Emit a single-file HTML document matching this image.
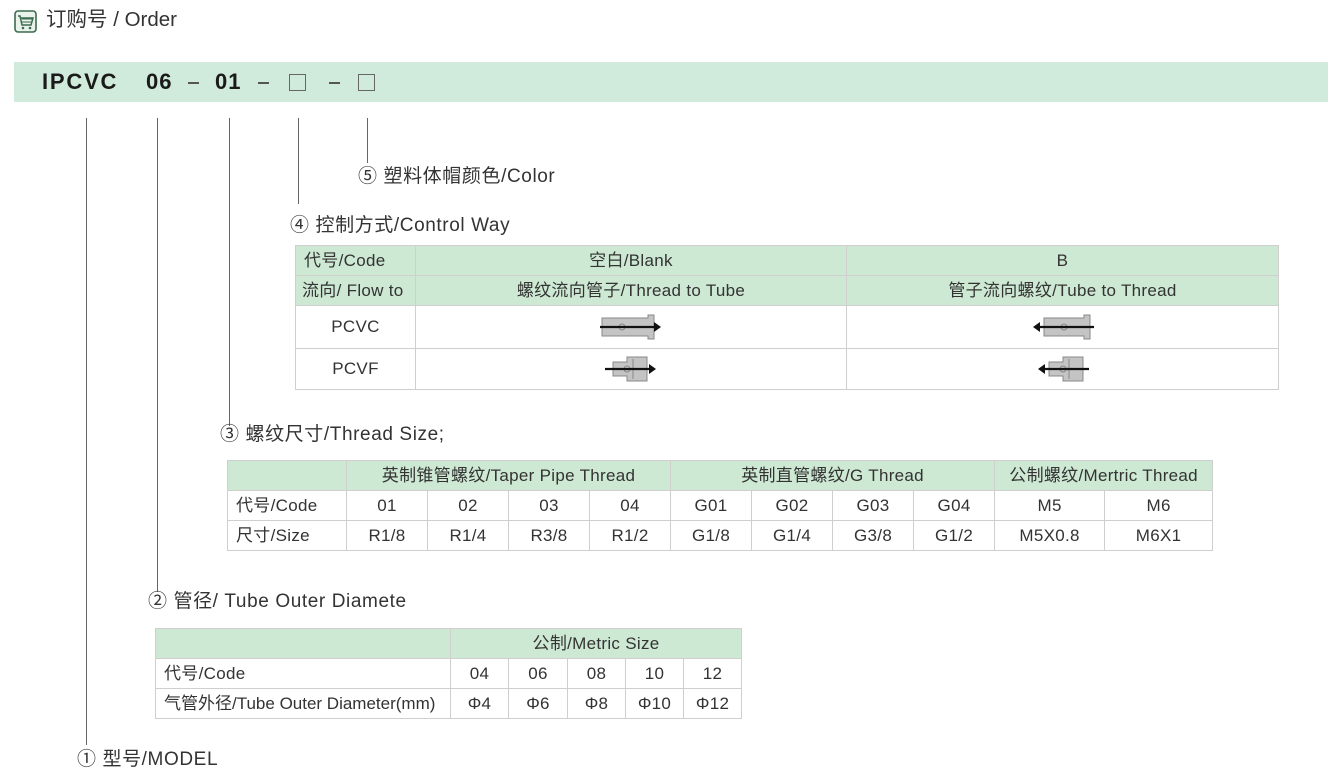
<!DOCTYPE html>
<html><head><meta charset="utf-8"><style>
*{margin:0;padding:0;box-sizing:border-box}
body{width:1328px;height:781px;background:#fff;position:relative;overflow:hidden;font-family:"Liberation Sans","Noto Sans CJK SC",sans-serif;color:#333}
.a{position:absolute;white-space:nowrap}
.v{position:absolute;width:1px;background:#666}
.lbl{font-size:19px;color:#333;line-height:22px;letter-spacing:0.6px}
table{position:absolute;border-collapse:collapse;table-layout:fixed;font-size:17px;color:#333;letter-spacing:0.3px}
td{border:1px solid #cfcfcf;text-align:center;padding:0;white-space:nowrap;line-height:18px}
.g td,td.g{background:#cde8d3}
td.l{text-align:left;padding-left:8px}
svg{vertical-align:middle}
</style></head><body>
<svg class="a" style="left:14px;top:10px" width="23" height="23" viewBox="0 0 23 23"><rect x="1" y="1" width="21" height="21" rx="3" fill="#e9f3ec" stroke="#3c6b4f" stroke-width="1.6"/><path d="M4 6h2l2 9h9l2-7H7" fill="none" stroke="#3c6b4f" stroke-width="1.5"/><path d="M8 9h10M8 12h9" stroke="#3c6b4f" stroke-width="1"/><circle cx="9" cy="18" r="1.3" fill="#3c6b4f"/><circle cx="16" cy="18" r="1.3" fill="#3c6b4f"/></svg>
<div class="a" style="left:46px;top:8px;font-size:20.5px;line-height:24px;color:#333">订购号 / Order</div>
<div class="a" style="left:14px;top:62px;width:1314px;height:40px;background:#d0eadb"></div>
<div class="a" style="left:42px;top:69px;font-size:22px;font-weight:bold;line-height:26px;color:#1a1a1a;letter-spacing:1.8px">IPCVC</div>
<div class="a" style="left:146px;top:69px;font-size:22px;font-weight:bold;line-height:26px;color:#1a1a1a;letter-spacing:1px">06</div>
<div class="a" style="left:188px;top:82px;width:11px;height:1.5px;background:#555"></div>
<div class="a" style="left:215px;top:69px;font-size:22px;font-weight:bold;line-height:26px;color:#1a1a1a;letter-spacing:1px">01</div>
<div class="a" style="left:258px;top:82px;width:11px;height:1.5px;background:#555"></div>
<div class="a" style="left:289px;top:74px;width:17px;height:17px;border:1.5px solid #666"></div>
<div class="a" style="left:329px;top:82px;width:11px;height:1.5px;background:#555"></div>
<div class="a" style="left:358px;top:74px;width:17px;height:17px;border:1.5px solid #666"></div>
<div class="v" style="left:86px;top:118px;height:627px"></div>
<div class="v" style="left:157px;top:118px;height:474px"></div>
<div class="v" style="left:229px;top:118px;height:308px"></div>
<div class="v" style="left:298px;top:118px;height:86px"></div>
<div class="v" style="left:367px;top:118px;height:45px"></div>
<div class="a lbl" style="left:358px;top:166px">⑤ 塑料体帽颜色/Color</div>
<div class="a lbl" style="left:290px;top:215px">④ 控制方式/Control Way</div>
<div class="a lbl" style="left:220px;top:424px">③ 螺纹尺寸/Thread Size;</div>
<div class="a lbl" style="left:148px;top:591px">② 管径/ Tube Outer Diamete</div>
<div class="a lbl" style="left:77px;top:749px">① 型号/MODEL</div>

<table style="left:295px;top:245px;width:983px">
<col style="width:120px"><col style="width:431px"><col style="width:432px">
<tr class="g" style="height:30px"><td class="l">代号/Code</td><td>空白/Blank</td><td>B</td></tr>
<tr class="g" style="height:30px"><td class="l" style="padding-left:6px">流向/ Flow to</td><td>螺纹流向管子/Thread to Tube</td><td>管子流向螺纹/Tube to Thread</td></tr>
<tr style="height:43px"><td>PCVC</td><td><svg width="66" height="28" viewBox="0 0 66 28"><path d="M4 5h46v-3h6v24h-6v-3H4z" fill="#c4c4c4" stroke="#888"/><circle cx="24" cy="14" r="3" fill="none" stroke="#888"/><path d="M2 14h56" stroke="#111" stroke-width="2.2"/><path d="M56 9l7 5-7 5z" fill="#111"/></svg></td><td><svg width="66" height="28" viewBox="0 0 66 28"><path d="M14 5h40v-3h6v24h-6v-3H14z" fill="#c4c4c4" stroke="#888"/><circle cx="34" cy="14" r="3" fill="none" stroke="#888"/><path d="M8 14h56" stroke="#111" stroke-width="2.2"/><path d="M10 9l-7 5 7 5z" fill="#111"/></svg></td></tr>
<tr style="height:41px"><td>PCVF</td><td><svg width="56" height="28" viewBox="0 0 56 28"><path d="M10 7h14v-5h20v24H24v-5H10z" fill="#c4c4c4" stroke="#888"/><path d="M30 4v20" stroke="#888"/><circle cx="24" cy="14" r="3" fill="none" stroke="#888"/><path d="M2 14h46" stroke="#111" stroke-width="2.2"/><path d="M46 9l7 5-7 5z" fill="#111"/></svg></td><td><svg width="56" height="28" viewBox="0 0 56 28"><path d="M14 7h14v-5h20v24H28v-5H14z" fill="#c4c4c4" stroke="#888"/><path d="M34 4v20" stroke="#888"/><circle cx="28" cy="14" r="3" fill="none" stroke="#888"/><path d="M8 14h46" stroke="#111" stroke-width="2.2"/><path d="M10 9l-7 5 7 5z" fill="#111"/></svg></td></tr>
</table>

<table style="left:227px;top:460px;width:985px">
<col style="width:119px"><col style="width:81px"><col style="width:81px"><col style="width:81px"><col style="width:81px"><col style="width:81px"><col style="width:81px"><col style="width:81px"><col style="width:81px"><col style="width:110px"><col style="width:108px">
<tr class="g" style="height:30px"><td></td><td colspan="4">英制锥管螺纹/Taper Pipe Thread</td><td colspan="4">英制直管螺纹/G Thread</td><td colspan="2">公制螺纹/Mertric Thread</td></tr>
<tr style="height:30px"><td class="l">代号/Code</td><td>01</td><td>02</td><td>03</td><td>04</td><td>G01</td><td>G02</td><td>G03</td><td>G04</td><td>M5</td><td>M6</td></tr>
<tr style="height:30px"><td class="l">尺寸/Size</td><td>R1/8</td><td>R1/4</td><td>R3/8</td><td>R1/2</td><td>G1/8</td><td>G1/4</td><td>G3/8</td><td>G1/2</td><td>M5X0.8</td><td>M6X1</td></tr>
</table>

<table style="left:155px;top:628px;width:586px">
<col style="width:295px"><col style="width:58px"><col style="width:59px"><col style="width:58px"><col style="width:58px"><col style="width:58px">
<tr class="g" style="height:30px"><td></td><td colspan="5">公制/Metric Size</td></tr>
<tr style="height:30px"><td class="l">代号/Code</td><td>04</td><td>06</td><td>08</td><td>10</td><td>12</td></tr>
<tr style="height:30px"><td class="l" style="letter-spacing:0">气管外径/Tube Outer Diameter(mm)</td><td>Φ4</td><td>Φ6</td><td>Φ8</td><td>Φ10</td><td>Φ12</td></tr>
</table>
</body></html>
